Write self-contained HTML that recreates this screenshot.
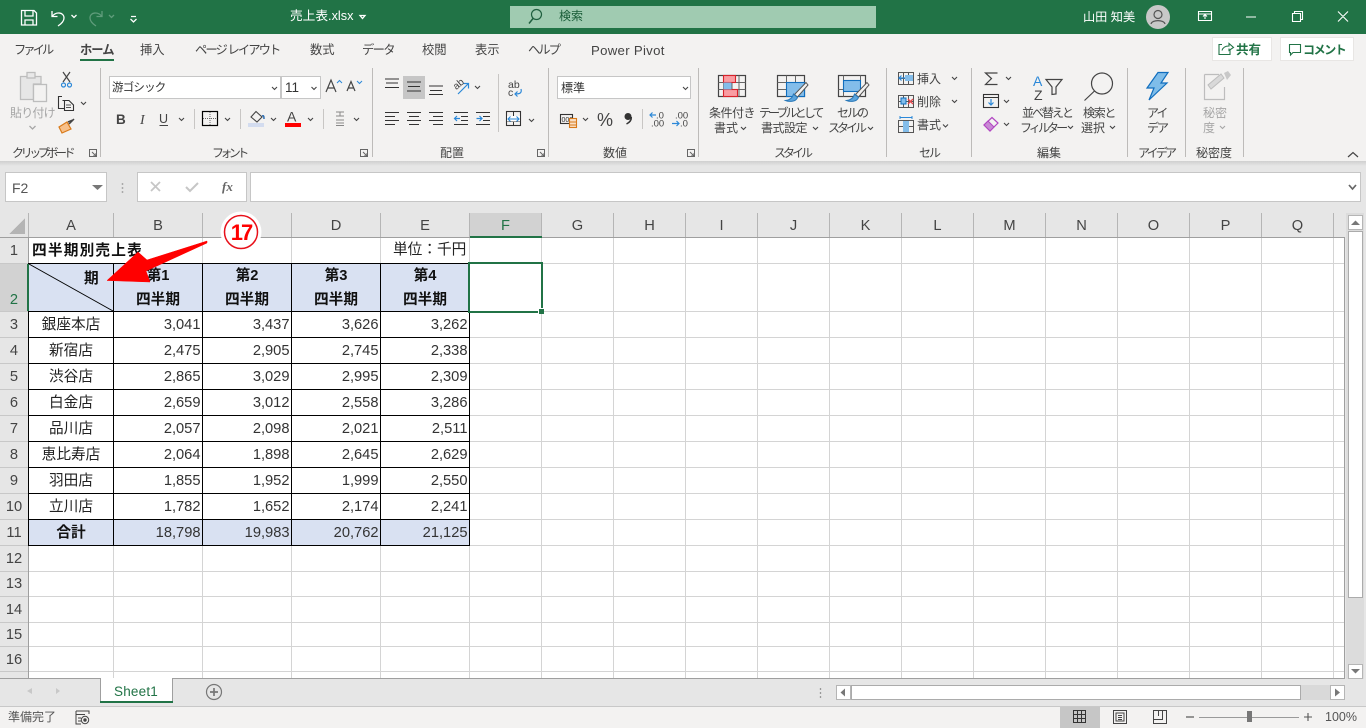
<!DOCTYPE html>
<html lang="ja"><head><meta charset="utf-8"><title>売上表.xlsx</title>
<style>
html,body{margin:0;padding:0;width:1366px;height:728px;overflow:hidden;background:#fff}
body{position:relative;font-family:"Liberation Sans","Noto Sans CJK JP",sans-serif;color:#444}
div,span,svg{position:absolute}
.t{white-space:nowrap;font-size:12px;line-height:16px;color:#444}
.tab{font-size:12.3px;top:42px;line-height:17px}
.g{font-size:12px;top:145px}
.w{color:#fff}
.c{font-size:14.67px;white-space:nowrap;color:#222;line-height:26px;height:26px;text-align:center}
.n{text-align:right;color:#333}
.a{left:29px;width:84px}.b{left:114px;width:86.5px}.cc{left:203px;width:86.5px}.d{left:292px;width:86.5px}.e{left:381px;width:86.5px}
.m{left:114px;width:88px}.m2{left:203px;width:88px}.m3{left:292px;width:88px}.m4{left:381px;width:88px}
.bd{font-weight:bold;color:#111}
.rh{left:0;width:28px;text-align:center;font-size:14.67px;color:#444;line-height:27px;height:27px}
.ch{top:213px;height:24px;line-height:26px;text-align:center;font-size:14.67px;color:#444}
.box{background:#fff;border:1px solid #c6c6c6;box-sizing:border-box}
</style></head><body>

<!-- title bar -->
<div style="left:0;top:0;width:1366px;height:34px;background:#217346"></div>
<div style="left:510px;top:6px;width:366px;height:22px;background:#a0cbb1"></div>
<div class="t w" style="left:290px;top:8px;font-size:12.7px">売上表.xlsx</div>
<div class="t" style="left:559px;top:8px;color:#185c37;font-size:12px">検索</div>
<div class="t w" style="left:1083px;top:9px;font-size:12.2px">山田 知美</div>

<!-- ribbon -->
<div style="left:0;top:34px;width:1366px;height:127px;background:#f3f2f1"></div>
<div style="left:0;top:161px;width:1366px;height:52px;background:#e6e6e6"></div>
<div style="left:0;top:161px;width:1366px;height:5px;background:linear-gradient(#cfcfcf,#e6e6e6)"></div>

<div class="t tab" style="left:14px;letter-spacing:-3px">ファイル</div>
<div class="t tab" style="left:80px;font-weight:bold;letter-spacing:-1px">ホーム</div>
<div style="left:80px;top:59px;width:34px;height:2px;background:#217346"></div>
<div class="t tab" style="left:140px">挿入</div>
<div class="t tab" style="left:195px;letter-spacing:-1.9px">ページ レイアウト</div>
<div class="t tab" style="left:310px">数式</div>
<div class="t tab" style="left:362px;letter-spacing:-1.700px">データ</div>
<div class="t tab" style="left:422px">校閲</div>
<div class="t tab" style="left:475px">表示</div>
<div class="t tab" style="left:528px;letter-spacing:-2px">ヘルプ</div>
<div class="t tab" style="left:591px;font-size:13.2px;letter-spacing:.3px">Power Pivot</div>

<div style="left:1213px;top:38px;width:58px;height:22px;background:#fff;box-shadow:0 0 0 1px #e8e6e4"></div>
<div class="t" style="left:1236px;top:42px;font-weight:bold;color:#217346;font-size:12.5px">共有</div>
<div style="left:1281px;top:38px;width:72px;height:22px;background:#fff;box-shadow:0 0 0 1px #e8e6e4"></div>
<div class="t" style="left:1303px;top:42px;font-weight:bold;color:#217346;font-size:12px;letter-spacing:-1.4px">コメント</div>

<!-- combos -->
<div class="box" style="left:109px;top:76px;width:172px;height:23px"></div>
<div class="box" style="left:281px;top:76px;width:40px;height:23px"></div>
<div class="box" style="left:557px;top:76px;width:134px;height:23px"></div>
<div style="left:403px;top:76px;width:22px;height:23px;background:#c6c6c6"></div>
<div class="t" style="left:112px;top:80px;font-size:11.5px;letter-spacing:-.8px;color:#333">游ゴシック</div>
<div class="t" style="left:285px;top:80px;font-size:13.5px;color:#333">11</div>
<div class="t" style="left:561px;top:80px;font-size:12px;color:#333">標準</div>

<!-- ribbon labels -->
<div class="t" style="left:10px;top:105px;color:#a6a6a6;letter-spacing:-.8px">貼り付け</div>
<div class="t" style="left:709px;top:105px;letter-spacing:-.5px">条件付き</div>
<div class="t" style="left:714px;top:120px">書式</div>
<div class="t" style="left:759px;top:105px;letter-spacing:-2.9px">テーブルとして</div>
<div class="t" style="left:761px;top:120px;letter-spacing:-.5px">書式設定</div>
<div class="t" style="left:837px;top:105px;letter-spacing:-2px">セルの</div>
<div class="t" style="left:828px;top:120px;letter-spacing:-3px">スタイル</div>
<div class="t" style="left:917px;top:71px">挿入</div>
<div class="t" style="left:917px;top:94px">削除</div>
<div class="t" style="left:917px;top:117px">書式</div>
<div class="t" style="left:1022px;top:105px;letter-spacing:-2px">並べ替えと</div>
<div class="t" style="left:1020px;top:120px;letter-spacing:-2.9px">フィルター</div>
<div class="t" style="left:1083px;top:105px;letter-spacing:-1.3px">検索と</div>
<div class="t" style="left:1081px;top:120px">選択</div>
<div class="t" style="left:1147px;top:105px;letter-spacing:-2px">アイ</div>
<div class="t" style="left:1147px;top:120px;letter-spacing:-2px">デア</div>
<div class="t" style="left:1203px;top:105px;color:#a6a6a6">秘密</div>
<div class="t" style="left:1203px;top:120px;color:#a6a6a6">度</div>

<div class="t g" style="left:12px;letter-spacing:-3.4px">クリップボード</div>
<div class="t g" style="left:212px;letter-spacing:-3.6px">フォント</div>
<div class="t g" style="left:440px">配置</div>
<div class="t g" style="left:603px">数値</div>
<div class="t g" style="left:774px;letter-spacing:-3px">スタイル</div>
<div class="t g" style="left:919px;letter-spacing:-2px">セル</div>
<div class="t g" style="left:1037px">編集</div>
<div class="t g" style="left:1138px;letter-spacing:-2.8px">アイデア</div>
<div class="t g" style="left:1196px">秘密度</div>

<!-- formula bar -->
<div class="box" style="left:5px;top:172px;width:102px;height:30px"></div>
<div class="t" style="left:12px;top:180px;font-size:14px;color:#555">F2</div>
<div class="box" style="left:137px;top:172px;width:110px;height:30px"></div>
<div class="box" style="left:250px;top:172px;width:1111px;height:30px"></div>
<div class="t" style="left:222px;top:178px;font:italic bold 13px/18px 'Liberation Serif',serif;color:#666">fx</div>

<!-- sheet headers -->
<div style="left:0;top:213px;width:1345px;height:25px;background:#e6e6e6"></div>
<div style="left:0;top:238px;width:28px;height:441px;background:#e6e6e6"></div>
<div style="left:470px;top:213px;width:72px;height:24px;background:#d2d2d2"></div>
<div style="left:0;top:264px;width:28px;height:48px;background:#d2d2d2"></div>

<!-- fills -->
<div style="left:29px;top:264px;width:440px;height:47px;background:#d9e1f2"></div>
<div style="left:29px;top:520px;width:440px;height:25px;background:#d9e1f2"></div>

<!-- grid -->
<svg style="left:0;top:0" width="1366" height="728" shape-rendering="crispEdges">
<g stroke="#d4d4d4" fill="none">
<path d="M29 263.500H1344M29 311.500H1344M29 337.500H1344M29 363.500H1344M29 389.500H1344M29 415.500H1344M29 441.500H1344M29 467.500H1344M29 493.500H1344M29 519.500H1344M29 545.500H1344M29 571.500H1344M29 596.500H1344M29 622.500H1344M29 646.500H1344M29 671.500H1344"/>
<path d="M113.500 238V678M202.500 238V678M291.500 238V678M380.500 238V678M469.500 238V678M541.500 238V678M613.500 238V678M685.500 238V678M757.500 238V678M829.500 238V678M901.500 238V678M973.500 238V678M1045.500 238V678M1117.500 238V678M1189.500 238V678M1261.500 238V678M1333.500 238V678"/>
</g>
<rect x="100" y="238" width="30" height="25" fill="#fff"/>
<g stroke="#b5b5b5">
<path d="M28.500 213V238M113.500 213V237M202.500 213V237M291.500 213V237M380.500 213V237M469.500 213V237M541.500 213V237M613.500 213V237M685.500 213V237M757.500 213V237M829.500 213V237M901.500 213V237M973.500 213V237M1045.500 213V237M1117.500 213V237M1189.500 213V237M1261.500 213V237M1333.500 213V237"/>
<path d="M0 263.500H28M0 311.500H28M0 337.500H28M0 363.500H28M0 389.500H28M0 415.500H28M0 441.500H28M0 467.500H28M0 493.500H28M0 519.500H28M0 545.500H28M0 571.500H28M0 596.500H28M0 622.500H28M0 646.500H28M0 671.500H28" stroke="#c8c8c8"/>
</g>
<path d="M0 237.500H1344.500V678.500H0M28.500 238V678" stroke="#9f9f9f" fill="none"/>
<g stroke="#000" fill="none">
<path d="M28 263.500H470M28 311.500H470M28 337.500H470M28 363.500H470M28 389.500H470M28 415.500H470M28 441.500H470M28 467.500H470M28 493.500H470M28 519.500H470M28 545.500H470"/>
<path d="M113.500 263V546M202.500 263V546M291.500 263V546M380.500 263V546M469.500 263V546M28.500 312V546"/>
</g>
<path d="M29 264L113 311" stroke="#000" shape-rendering="auto"/>
<rect x="27" y="264" width="2" height="47" fill="#217346"/>
<rect x="470" y="236" width="72" height="2" fill="#217346"/>
<rect x="469" y="263" width="73" height="49" fill="none" stroke="#217346" stroke-width="2"/>
<rect x="538" y="308" width="6" height="6" fill="#fff"/>
<rect x="539" y="309" width="5" height="5" fill="#217346"/>
<path d="M9 234H25V218Z" fill="#b4b4b4"/>
</svg>

<!-- column headers -->
<div class="ch" style="left:29px;width:84px">A</div><div class="ch" style="left:114px;width:88px">B</div><div class="ch" style="left:203px;width:88px">C</div><div class="ch" style="left:292px;width:88px">D</div><div class="ch" style="left:381px;width:88px">E</div><div class="ch" style="left:470px;width:71px;color:#217346">F</div><div class="ch" style="left:542px;width:71px">G</div><div class="ch" style="left:614px;width:71px">H</div><div class="ch" style="left:686px;width:71px">I</div><div class="ch" style="left:758px;width:71px">J</div><div class="ch" style="left:830px;width:71px">K</div><div class="ch" style="left:902px;width:71px">L</div><div class="ch" style="left:974px;width:71px">M</div><div class="ch" style="left:1046px;width:71px">N</div><div class="ch" style="left:1118px;width:71px">O</div><div class="ch" style="left:1190px;width:71px">P</div><div class="ch" style="left:1262px;width:71px">Q</div>

<!-- row headers -->
<div class="rh" style="top:238px">1</div><div class="rh" style="top:287px;color:#217346">2</div><div class="rh" style="top:312px">3</div><div class="rh" style="top:338px">4</div><div class="rh" style="top:364px">5</div><div class="rh" style="top:390px">6</div><div class="rh" style="top:416px">7</div><div class="rh" style="top:442px">8</div><div class="rh" style="top:468px">9</div><div class="rh" style="top:494px">10</div><div class="rh" style="top:520px">11</div><div class="rh" style="top:546px">12</div><div class="rh" style="top:571px">13</div><div class="rh" style="top:597px">14</div><div class="rh" style="top:622px">15</div><div class="rh" style="top:647px">16</div>

<!-- cells -->
<div class="c bd" style="left:32px;top:238px;letter-spacing:1.200px">四半期別売上表</div>
<div class="c" style="left:393px;top:237px">単位：千円</div>
<div class="c bd" style="left:84px;top:266px">期</div>
<div class="c bd m" style="top:263px">第1</div><div class="c bd m" style="top:287px">四半期</div>
<div class="c bd m2" style="top:263px">第2</div><div class="c bd m2" style="top:287px">四半期</div>
<div class="c bd m3" style="top:263px">第3</div><div class="c bd m3" style="top:287px">四半期</div>
<div class="c bd m4" style="top:263px">第4</div><div class="c bd m4" style="top:287px">四半期</div>

<div class="c a" style="top:312px">銀座本店</div><div class="c n b" style="top:312px">3,041</div><div class="c n cc" style="top:312px">3,437</div><div class="c n d" style="top:312px">3,626</div><div class="c n e" style="top:312px">3,262</div>
<div class="c a" style="top:338px">新宿店</div><div class="c n b" style="top:338px">2,475</div><div class="c n cc" style="top:338px">2,905</div><div class="c n d" style="top:338px">2,745</div><div class="c n e" style="top:338px">2,338</div>
<div class="c a" style="top:364px">渋谷店</div><div class="c n b" style="top:364px">2,865</div><div class="c n cc" style="top:364px">3,029</div><div class="c n d" style="top:364px">2,995</div><div class="c n e" style="top:364px">2,309</div>
<div class="c a" style="top:390px">白金店</div><div class="c n b" style="top:390px">2,659</div><div class="c n cc" style="top:390px">3,012</div><div class="c n d" style="top:390px">2,558</div><div class="c n e" style="top:390px">3,286</div>
<div class="c a" style="top:416px">品川店</div><div class="c n b" style="top:416px">2,057</div><div class="c n cc" style="top:416px">2,098</div><div class="c n d" style="top:416px">2,021</div><div class="c n e" style="top:416px">2,511</div>
<div class="c a" style="top:442px">恵比寿店</div><div class="c n b" style="top:442px">2,064</div><div class="c n cc" style="top:442px">1,898</div><div class="c n d" style="top:442px">2,645</div><div class="c n e" style="top:442px">2,629</div>
<div class="c a" style="top:468px">羽田店</div><div class="c n b" style="top:468px">1,855</div><div class="c n cc" style="top:468px">1,952</div><div class="c n d" style="top:468px">1,999</div><div class="c n e" style="top:468px">2,550</div>
<div class="c a" style="top:494px">立川店</div><div class="c n b" style="top:494px">1,782</div><div class="c n cc" style="top:494px">1,652</div><div class="c n d" style="top:494px">2,174</div><div class="c n e" style="top:494px">2,241</div>
<div class="c a bd" style="top:520px">合計</div><div class="c n b" style="top:520px">18,798</div><div class="c n cc" style="top:520px">19,983</div><div class="c n d" style="top:520px">20,762</div><div class="c n e" style="top:520px">21,125</div>

<!-- tab strip / status -->
<div style="left:0;top:679px;width:1366px;height:27px;background:#e6e6e6"></div>
<div style="left:0;top:706px;width:1366px;height:22px;background:#f3f2f1;border-top:1px solid #c8c8c8;box-sizing:border-box"></div>
<div style="left:100px;top:678px;width:73px;height:25px;background:#fff;border-left:1px solid #9f9f9f;border-right:1px solid #9f9f9f;box-sizing:border-box"></div>
<div style="left:100px;top:701px;width:73px;height:2px;background:#217346"></div>
<div class="t" style="left:114px;top:684px;font-size:13.5px;color:#217346;letter-spacing:.2px">Sheet1</div>
<div class="t" style="left:8px;top:709px;font-size:12px;color:#555">準備完了</div>
<div style="left:1060px;top:707px;width:40px;height:21px;background:#c6c6c6"></div>
<div class="t" style="left:1325px;top:709px;font-size:12.500px;color:#555">100%</div>

<!-- scrollbars -->
<div style="left:1345px;top:213px;width:21px;height:466px;background:#e6e6e6"></div>
<div style="left:1346px;top:213px;width:18px;height:466px;background:#dcdcdc"></div>
<div class="box" style="left:1348px;top:215px;width:15px;height:15px;border-color:#b5b5b5"></div>
<div class="box" style="left:1348px;top:231px;width:15px;height:367px;border-color:#ababab"></div>
<div class="box" style="left:1348px;top:664px;width:15px;height:15px;border-color:#b5b5b5"></div>
<div style="left:836px;top:685px;width:509px;height:15px;background:#d9d9d9"></div>
<div class="box" style="left:836px;top:685px;width:15px;height:15px;border-color:#b5b5b5"></div>
<div class="box" style="left:851px;top:685px;width:450px;height:15px;border-color:#ababab"></div>
<div class="box" style="left:1330px;top:685px;width:15px;height:15px;border-color:#b5b5b5"></div>

<!-- icons -->
<svg style="left:0;top:0" width="1366" height="728" fill="none">
<!-- QAT -->
<g stroke="#fff" stroke-width="1.300">
<path d="M21.500 10.500H34L36.500 13V25H21.500Z"/><path d="M25 10.500V16H33V10.500M25 25V20H33V25"/>
<path d="M52 11V16.500H57.500M52.500 16C56 11.500 64 12 64 18C64 21.500 61 24 58 26"/>
<path d="M71.500 15L74 17.500L76.500 15M131 16.500H136M130.500 19L133.500 22L136.500 19M360 15.500H365L362.500 18.500Z"/>
</g>
<path d="M102 11V16.500H96.500M101.500 16C98 11.500 90 12 90 18C90 21.500 93 24 96 26M109 15L111.500 17.500L114 15" stroke="#5f9c7b" stroke-width="1.300"/>
<circle cx="536.500" cy="14.500" r="5" stroke="#1f5f3f" stroke-width="1.200"/><path d="M533 18.500L529 23.500" stroke="#1f5f3f" stroke-width="1.500"/>
<circle cx="1158" cy="17" r="12" fill="#c8c8c8"/><circle cx="1158" cy="14.500" r="4" stroke="#555" stroke-width="1.200"/><path d="M1151 24C1152 19.500 1164 19.500 1165 24" stroke="#555" stroke-width="1.200"/>
<g stroke="#fff" stroke-width="1.100">
<path d="M1198.500 11.500H1211.500V20.500H1198.500ZM1198.500 14H1211.500M1205 19V15M1203 16.500L1205 14.500L1207 16.500"/>
<path d="M1246 17H1256M1292.500 13.500H1300.500V21.500H1292.500ZM1294.500 13.500V11.500H1302.500V19.500H1300.500M1338 11.500L1348 21.500M1348 11.500L1338 21.500"/>
</g>
<!-- share / comment -->
<path d="M1222 44.500H1219V54.500H1230V50M1222 50.500C1223 47 1226 46 1229 46V43.500L1233.500 47.500L1229 50.500V48.500" stroke="#217346" stroke-width="1.100"/>
<path d="M1289.500 44.500H1300.500V52.500H1293L1290.500 55V52.500H1289.500Z" stroke="#217346" stroke-width="1.100"/>
<!-- paste -->
<g stroke="#bdbdbd" stroke-width="1.300">
<path d="M20.500 76.500H41V84H33.500V99.500H20.500Z" fill="#e6e6e6"/><rect x="27" y="72.500" width="8" height="5.500" fill="#e8e8e8"/><rect x="33.500" y="84.500" width="13" height="17" fill="#f3f2f1"/>
<path d="M29.500 126L32.500 129L35.500 126" stroke="#a6a6a6"/>
</g>
<!-- scissors -->
<path d="M63 72L70 82M70 72L63 82" stroke="#444" stroke-width="1.200"/><circle cx="63.500" cy="85" r="2" stroke="#2b88d8" stroke-width="1.200"/><circle cx="69.500" cy="85" r="2" stroke="#2b88d8" stroke-width="1.200"/>
<!-- copy -->
<path d="M62 96.500H58.500V108.500H64.500M62.500 100.500H69L73.500 105V110.500H64.500V100.500Z" fill="#f3f2f1" stroke="#333" stroke-width="1.100"/><path d="M66 105H71M66 107.500H71" stroke="#555"/>
<path d="M81 102L83.500 104.500L86 102" stroke="#444" stroke-width="1.100"/>
<!-- painter -->
<path d="M59 127L67 122L71 129L62 133Z" fill="#f7c08a" stroke="#d97a1a" stroke-width="1.200"/><path d="M68 122L73 120M69 124L74 119" stroke="#444" stroke-width="1.500"/>
<!-- font dropdown chevrons -->
<g stroke="#444" stroke-width="1.100">
<path d="M272 87L274.500 89.500L277 87M311.500 87L314 89.500L316.500 87"/>
<path d="M179 118L181.500 120.500L184 118M225 118L227.500 120.500L230 118M271 118L273.500 120.500L276 118M308 118L310.500 120.500L313 118M354 118L356.500 120.500L359 118"/>
<path d="M475 86L477.500 88.500L480 86M529 119L531.500 121.500L534 119M683 87L685.500 89.500L688 87M583 118L585.500 120.500L588 118"/>
<path d="M741 127L743.500 129.500L746 127M813 127L815.500 129.500L818 127M868 127L870.500 129.500L873 127"/>
<path d="M952 77L954.500 79.500L957 77M952 100L954.500 102.500L957 100M943 124.500L945.500 127L948 124.500"/>
<path d="M1006 77L1008.500 79.500L1011 77M1004 100L1006.500 102.500L1009 100M1004 123L1006.500 125.500L1009 123"/>
<path d="M1068 126L1070.500 128.500L1073 126M1110 126L1112.500 128.500L1115 126"/>
</g>
<path d="M1220 126L1222.500 128.500L1225 126" stroke="#a6a6a6" stroke-width="1.100"/>
<!-- grow/shrink -->
<path d="M326 92L331 80L336 92M328 88H334M347 91L351 81.500L355 91M348.500 88H353.500" stroke="#444" stroke-width="1.200"/>
<path d="M337 83L339.500 80.500L342 83" stroke="#2b88d8"/><path d="M357 81L359.500 83.500L362 81" stroke="#2b88d8"/>
<!-- seps inside -->
<path d="M194.500 109V129M240.500 109V129M323.500 109V129M642.500 109V129M498.500 74V132" stroke="#c8c6c4"/>
<!-- BIU -->
<text x="116" y="124" font-family="Liberation Sans" font-weight="bold" font-size="13.500" fill="#444">B</text>
<text x="140" y="124" font-family="Liberation Serif" font-style="italic" font-size="14" fill="#444">I</text>
<text x="159" y="123" font-family="Liberation Sans" font-size="12.500" fill="#444">U</text>
<path d="M159.500 125.500H168" stroke="#444"/>
<!-- border -->
<rect x="202.500" y="111.500" width="15" height="14" stroke="#000" stroke-width="1.200"/><path d="M210 112V125M203 118.500H217" stroke="#666" stroke-dasharray="1 1"/>
<!-- fill -->
<path d="M251 117L256 111.500L262 117L257 122Z" stroke="#444" stroke-width="1.100"/><path d="M262 116C264 115 264 117 264 119" stroke="#2b6cb0" stroke-width="1.500"/>
<rect x="248" y="123" width="16" height="4" fill="#d3dcef"/>
<!-- font color -->
<text x="287" y="121.500" font-family="Liberation Sans" font-size="14" fill="#444">A</text>
<rect x="285" y="123" width="16" height="4" fill="#f00"/>
<!-- furigana -->
<path d="M336 112H344M340 112V116M336 116H344M336 120H344M336 123H344M336 125.500H344" stroke="#888"/>
<!-- alignment -->
<g stroke="#333" stroke-width="1.100">
<path d="M385 79H399M386 83H398M385 87.500H399"/>
<path d="M407 82H421M408 86.500H420M407 91H421"/>
<path d="M429 86H443M430 90.500H442M429 94.500H443"/>
<path d="M385 112.500H399M385 116.500H395M385 120.500H399M385 124.500H395"/>
<path d="M407 112.500H421M409 116.500H419M407 120.500H421M409 124.500H419"/>
<path d="M429 112.500H443M433 116.500H443M429 120.500H443M433 124.500H443"/>
<path d="M454 112.500H468M461 116.500H468M461 120.500H468M454 124.500H468"/>
<path d="M476 112.500H490M483 116.500H490M483 120.500H490M476 124.500H490"/>
</g>
<path d="M460 118.500H454.500M457 116L454.500 118.500L457 121M476.500 118.500H482M479.500 116L482 118.500L479.500 121" stroke="#2b88d8" stroke-width="1.200"/>
<text x="454" y="88" font-family="Liberation Sans" font-size="10" fill="#444" transform="rotate(-40 458 86)">ab</text>
<path d="M458 94L468 84M463.500 83.500H468.500V88.500" stroke="#2b88d8" stroke-width="1.200"/>
<!-- wrap -->
<text x="508" y="88" font-family="Liberation Sans" font-size="10.500" fill="#444">ab</text>
<text x="508" y="96" font-family="Liberation Sans" font-size="10.500" fill="#444">c</text>
<path d="M521 89C522 93 520 94 515 94M517.500 91.500L515 94L517.500 96.500" stroke="#2b88d8" stroke-width="1.200"/>
<!-- merge -->
<rect x="506.500" y="111.500" width="14" height="14" stroke="#333" stroke-width="1.100"/><path d="M507 116.500H520M507 121.500H520M513.500 112V116M513.500 122V125" stroke="#333"/>
<rect x="507" y="116" width="13" height="5.500" fill="#fff"/><path d="M508 119H519M510.500 116.500L508 119L510.500 121.500M516.500 116.500L519 119L516.500 121.500" stroke="#2b88d8" stroke-width="1.100"/>
<!-- number -->
<rect x="560.500" y="114.500" width="12" height="9" stroke="#333" stroke-width="1.100"/>
<text x="561.500" y="122" font-family="Liberation Sans" font-size="7" fill="#333">000</text>
<rect x="569.500" y="118.500" width="7" height="9" fill="#f9e0c7" stroke="#d97a1a" stroke-width="1.100"/><path d="M570 122H576M570 125H576" stroke="#d97a1a"/>
<text x="597" y="126" font-family="Liberation Sans" font-size="18" fill="#444">%</text>
<circle cx="628" cy="116.500" r="3.500" fill="#333"/><path d="M631.300 117C631.500 120 629.500 122.500 626.500 124" stroke="#333" stroke-width="1.500"/>
<text x="656" y="118.500" font-family="Liberation Sans" font-size="9.500" fill="#444">.0</text>
<text x="651" y="126.500" font-family="Liberation Sans" font-size="9.500" fill="#444">.00</text>
<text x="675" y="118.500" font-family="Liberation Sans" font-size="9.500" fill="#444">.00</text>
<text x="680" y="126.500" font-family="Liberation Sans" font-size="9.500" fill="#444">.0</text>
<path d="M650 115H656M652.500 112.500L650 115L652.500 117.500M672 123.500H679M676.500 121L679 123.500L676.500 126" stroke="#2b88d8" stroke-width="1.200"/>
<!-- cond format -->
<rect x="718.500" y="75.500" width="27" height="21" stroke="#444" stroke-width="1.200"/><path d="M718.500 82.500H745.500M718.500 89.500H745.500M723.500 75.500V96.500M732 75.500V96.500M739 75.500V96.500" stroke="#666"/>
<rect x="723.500" y="75.500" width="12" height="7" fill="#f99da2" stroke="#d8232a" stroke-width="1.100"/><rect x="723.500" y="89.500" width="14" height="7" fill="#f99da2" stroke="#d8232a" stroke-width="1.100"/><rect x="723.500" y="82.500" width="8" height="7" fill="#83bdea"/>
<!-- table style -->
<rect x="777.500" y="75.500" width="27" height="21" stroke="#444" stroke-width="1.200"/><path d="M777.500 82.500H804.500M777.500 89.500H804.500M786.500 75.500V96.500M795.500 75.500V96.500" stroke="#666"/>
<rect x="786.500" y="82.500" width="18" height="14" fill="#83bdea" stroke="#106ebe" stroke-width="1.100"/>
<path d="M806 82.500L808 85L797.500 97L794.500 94.500Z" fill="#f3f2f1" stroke="#555" stroke-width="1"/><path d="M793.500 94C792.500 98 790 100 785.500 100.500C789 102 796 102 797.500 97.500Z" fill="#5ba4dc" stroke="#2a78b8"/>
<!-- cell style -->
<rect x="838.500" y="75.500" width="27" height="21" stroke="#444" stroke-width="1.200"/><path d="M838.500 89.500H865.500M843.500 75.500V96.500M860.500 75.500V96.500" stroke="#666"/>
<rect x="843.500" y="80.500" width="17" height="11" fill="#83bdea" stroke="#106ebe" stroke-width="1.100"/>
<path d="M867 82.500L869 85L858.500 97L855.500 94.500Z" fill="#f3f2f1" stroke="#555" stroke-width="1"/><path d="M854.500 94C853.500 98 851 100 846.500 100.500C850 102 857 102 858.500 97.500Z" fill="#5ba4dc" stroke="#2a78b8"/>
<!-- cells icons -->
<g stroke="#555" stroke-width="1">
<path d="M898.500 72.500H913.500V84.500H898.500ZM898.500 78.500H913.500M903.500 72.500V84.500M908.500 72.500V84.500" />
<path d="M898.500 95.500H913.500V107.500H898.500ZM898.500 101.500H913.500M903.500 95.500V107.500M908.500 95.500V107.500"/>
<path d="M898.500 120.500H913.500V132.500H898.500ZM898.500 126.500H913.500M903.500 120.500V132.500M908.500 120.500V132.500"/>
</g>
<rect x="905" y="75" width="8" height="6" fill="#83bdea"/><path d="M905 78H899M901.500 75.500L899 78L901.500 80.500" stroke="#2b88d8" stroke-width="1.200"/>
<rect x="901" y="98" width="5" height="6" fill="#83bdea" stroke="#106ebe"/><path d="M908 99L913 104M913 99L908 104" stroke="#e8484e" stroke-width="1.300"/>
<rect x="903" y="121" width="6" height="11" fill="#83bdea"/><path d="M900 117.500H912M900 116V119M912 116V119" stroke="#2b88d8"/>
<!-- editing -->
<path d="M997.500 73H985.500L991.500 78.500L985.500 84.500H997.500" stroke="#444" stroke-width="1.200"/>
<rect x="983.500" y="94.500" width="15" height="13" stroke="#333" stroke-width="1.100"/><path d="M983.500 97.500H998.500" stroke="#333"/><path d="M991 99V105M988.500 102.500L991 105L993.500 102.500" stroke="#2b88d8" stroke-width="1.200"/>
<path d="M984 125L992 117.500L998 123L990 131Z" fill="#f3f2f1" stroke="#b146c2" stroke-width="1.200"/><path d="M984 125L988 121L994 127L990 131Z" fill="#c889d4" stroke="#b146c2" stroke-width="1"/>
<!-- sort -->
<text x="1033" y="86" font-family="Liberation Sans" font-size="14" fill="#2b88d8">A</text>
<text x="1034" y="100" font-family="Liberation Sans" font-size="14" fill="#444">Z</text>
<path d="M1046 79.500H1062L1056 87V94L1052 94.500V87Z" stroke="#444" stroke-width="1.200"/>
<!-- find -->
<circle cx="1102" cy="83.500" r="10.500" stroke="#444" stroke-width="1.200"/><path d="M1094.500 91L1084.500 100.500" stroke="#444" stroke-width="1.200"/>
<!-- idea -->
<path d="M1158 72.500H1168L1161 83H1167L1149 100L1154 88H1147Z" fill="#7fbde9" stroke="#106ebe" stroke-width="1.200"/>
<!-- sensitivity -->
<path d="M1204.500 74.500H1219M1204.500 74.500V99.500H1224.500V87" stroke="#bdbdbd" stroke-width="1.200"/>
<path d="M1208 85L1211 89L1224 78L1221 74Z" fill="#d9d9d9" stroke="#bdbdbd"/><path d="M1224 73L1228 71L1231 75L1227 80Z" fill="#c8c8c8"/>
<!-- launcher icons -->
<g stroke="#666" stroke-width="1">
<path d="M89.500 149.500H96.500V156.500H89.500ZM92 152L96 156M96 153V156H93"/>
<path d="M360.500 149.500H367.500V156.500H360.500ZM363 152L367 156M367 153V156H364"/>
<path d="M537.500 149.500H544.500V156.500H537.500ZM540 152L544 156M544 153V156H541"/>
<path d="M687.500 149.500H694.500V156.500H687.500ZM690 152L694 156M694 153V156H691"/>
</g>
<path d="M1348 157L1353 152.500L1358 157" stroke="#444" stroke-width="1.200"/>
<!-- group separators -->
<path d="M100.500 68V157M372.500 68V157M548.500 68V157M698.500 68V157M886.500 68V157M971.500 68V157M1127.500 68V157M1185.500 68V157M1243.500 68V157" stroke="#bdbbb9"/>
<!-- formula bar icons -->
<path d="M92 185H103L97.500 190Z" fill="#777"/>
<path d="M122.500 183V185M122.500 187V189M122.500 191V193" stroke="#aaa" stroke-width="1.500"/>
<path d="M151 182L160 191M160 182L151 191" stroke="#c6c6c6" stroke-width="1.800"/>
<path d="M186 187L190 191L198 183" stroke="#c6c6c6" stroke-width="2"/>
<path d="M1349 185L1352.500 189L1356 185" stroke="#666" stroke-width="1.700"/>
<!-- scroll arrows -->
<path d="M1351 225H1360L1355.500 220.500Z" fill="#777"/><path d="M1351 669H1360L1355.500 673.500Z" fill="#777"/>
<path d="M845 688.500V696.500L840.500 692.500Z" fill="#777"/><path d="M1335 688.500V696.500L1340 692.500Z" fill="#777"/>
<path d="M32 688V694L27 691ZM56 688V694L60 691Z" fill="#c8c8c8"/>
<circle cx="214" cy="692" r="7.500" stroke="#777" stroke-width="1.200"/><path d="M210 692H218M214 688V696" stroke="#777" stroke-width="1.700"/>
<path d="M820.500 688V690M820.500 692V694M820.500 696V698" stroke="#999" stroke-width="1.300"/>
<!-- status icons -->
<path d="M76 711H89V714M76 711V724H81M76 714.500H85M78 718H81M78 721H81" stroke="#444"/><circle cx="85" cy="720" r="3.700" stroke="#444"/><circle cx="85" cy="720" r="1.700" fill="#444"/>
<path d="M1073.500 710.500H1085.500V722.500H1073.500ZM1077.500 710.500V722.500M1081.500 710.500V722.500M1073.500 714.500H1085.500M1073.500 718.500H1085.500" stroke="#333"/>
<path d="M1113.500 710.500H1126.500V723.500H1113.500ZM1116 713H1124V721H1116ZM1118 715.500H1122M1118 717.500H1122M1118 719.500H1122" stroke="#444"/>
<path d="M1153.500 710.500H1166.500V723.500H1153.500ZM1153.500 719.500H1162.500V710.500M1158.500 710.500V716" stroke="#444"/>
<path d="M1199 717.500H1299" stroke="#9a9a9a"/><path d="M1186 717H1194" stroke="#555" stroke-width="1.200"/>
<rect x="1247" y="711" width="5" height="11" fill="#777"/>
<path d="M1304 717H1312M1308 713V721" stroke="#555" stroke-width="1.100"/>
<!-- arrow & badge -->
<path d="M207 241L147 260L138 252L107 280.500L150 282L146 271L207 243Z" fill="#f00" stroke="#f00" stroke-width=".5"/>
<circle cx="241" cy="232" r="20.500" fill="#fff"/>
<circle cx="241" cy="232" r="16.500" fill="#fff" stroke="#e8101a" stroke-width="1.500"/>
<text x="241" y="240" text-anchor="middle" font-family="Liberation Sans" font-weight="bold" font-size="22" letter-spacing="-2" fill="#f00">17</text>
</svg>
</body></html>
